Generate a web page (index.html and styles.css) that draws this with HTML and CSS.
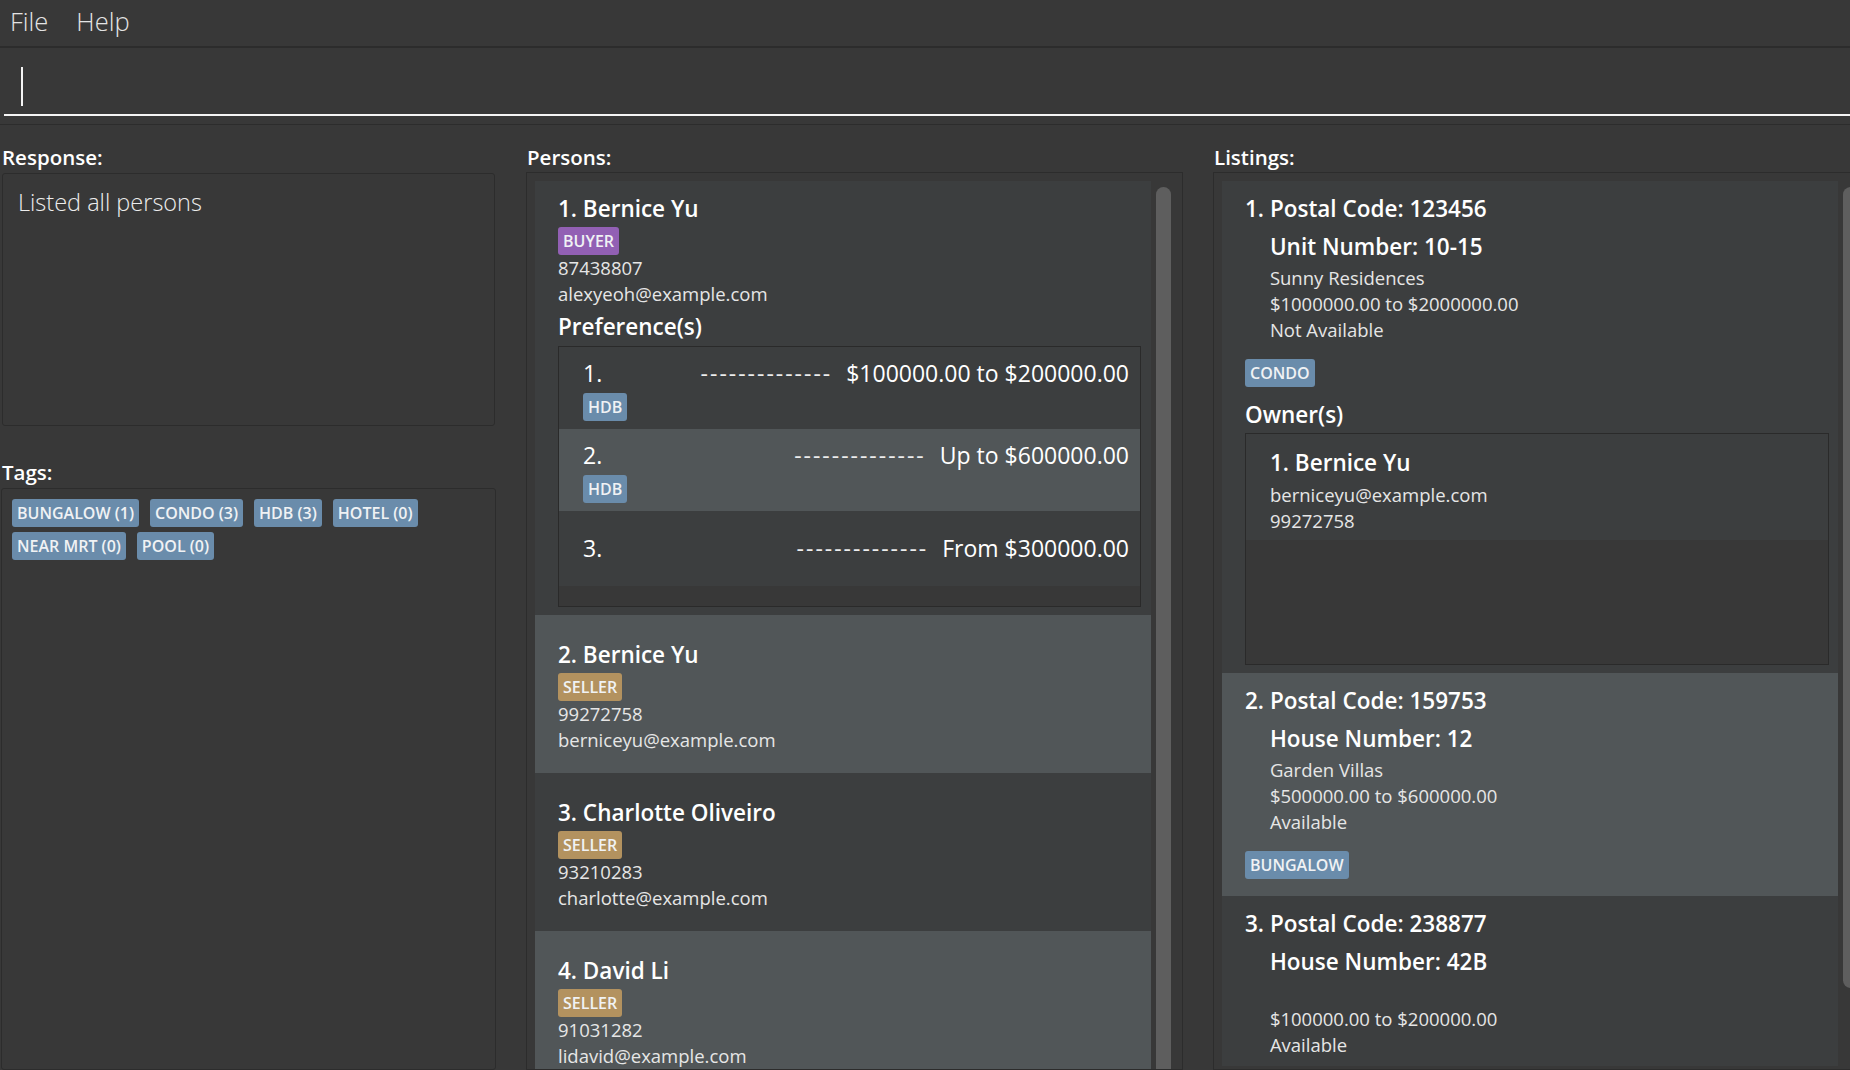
FILE: index.html
```html
<!DOCTYPE html>
<html lang="en">
<head>
<meta charset="utf-8">
<title>Address Book</title>
<link rel="stylesheet" href="styles.css">
</head>
<body>
<div class="app">
  <div class="menubar">
    <span class="menu-item">File</span>
    <span class="menu-item">Help</span>
  </div>
  <div class="command">
    <div class="command-field"><span class="caret"></span></div>
  </div>
  <div class="main">
    <div class="col col-left">
      <div class="label">Response:</div>
      <div class="response-box">Listed all persons</div>
      <div class="label tags-label">Tags:</div>
      <div class="tags-box">
        <span class="chip tag">BUNGALOW (1)</span>
        <span class="chip tag">CONDO (3)</span>
        <span class="chip tag">HDB (3)</span>
        <span class="chip tag">HOTEL (0)</span>
        <span class="chip tag">NEAR MRT (0)</span>
        <span class="chip tag">POOL (0)</span>
      </div>
    </div>

    <div class="col col-list">
      <div class="label list-label">Persons:</div>
      <div class="list-box">
        <div class="list">
          <div class="pcard odd">
            <div class="big">1. Bernice Yu</div>
            <div class="chips"><span class="chip buyer">BUYER</span></div>
            <div class="small">87438807</div>
            <div class="small">alexyeoh@example.com</div>
            <div class="section-title">Preference(s)</div>
            <div class="pref-box">
              <div class="pref odd">
                <div class="pref-line"><span class="pidx">1.</span><span class="dashes">--------------</span><span class="price">$100000.00 to $200000.00</span></div>
                <div class="chips"><span class="chip tag">HDB</span></div>
              </div>
              <div class="pref even">
                <div class="pref-line"><span class="pidx">2.</span><span class="dashes">--------------</span><span class="price">Up to $600000.00</span></div>
                <div class="chips"><span class="chip tag">HDB</span></div>
              </div>
              <div class="pref odd no-tags">
                <div class="pref-line"><span class="pidx">3.</span><span class="dashes">--------------</span><span class="price">From $300000.00</span></div>
              </div>
              <div class="pref-fill"></div>
            </div>
          </div>
          <div class="pcard even">
            <div class="big">2. Bernice Yu</div>
            <div class="chips"><span class="chip seller">SELLER</span></div>
            <div class="small">99272758</div>
            <div class="small">berniceyu@example.com</div>
          </div>
          <div class="pcard odd">
            <div class="big">3. Charlotte Oliveiro</div>
            <div class="chips"><span class="chip seller">SELLER</span></div>
            <div class="small">93210283</div>
            <div class="small">charlotte@example.com</div>
          </div>
          <div class="pcard even">
            <div class="big">4. David Li</div>
            <div class="chips"><span class="chip seller">SELLER</span></div>
            <div class="small">91031282</div>
            <div class="small">lidavid@example.com</div>
          </div>
        </div>
        <div class="track"><div class="thumb thumb-persons"></div></div>
      </div>
    </div>

    <div class="col col-list">
      <div class="label list-label">Listings:</div>
      <div class="list-box">
        <div class="list">
          <div class="lcard odd">
            <div class="lhead">
              <span class="lidx">1. </span>
              <div class="ldetails">
                <div class="big">Postal Code: 123456</div>
                <div class="big sub">Unit Number: 10-15</div>
                <div class="small first">Sunny Residences</div>
                <div class="small">$1000000.00 to $2000000.00</div>
                <div class="small">Not Available</div>
              </div>
            </div>
            <div class="chips lchips"><span class="chip tag">CONDO</span></div>
            <div class="section-title owners-title">Owner(s)</div>
            <div class="owner-box">
              <div class="owner-card">
                <div class="big">1. Bernice Yu</div>
                <div class="small first">berniceyu@example.com</div>
                <div class="small">99272758</div>
              </div>
            </div>
          </div>
          <div class="lcard even no-owner">
            <div class="lhead">
              <span class="lidx">2. </span>
              <div class="ldetails">
                <div class="big">Postal Code: 159753</div>
                <div class="big sub">House Number: 12</div>
                <div class="small first">Garden Villas</div>
                <div class="small">$500000.00 to $600000.00</div>
                <div class="small">Available</div>
              </div>
            </div>
            <div class="chips lchips"><span class="chip tag">BUNGALOW</span></div>
          </div>
          <div class="lcard odd">
            <div class="lhead">
              <span class="lidx">3. </span>
              <div class="ldetails">
                <div class="big">Postal Code: 238877</div>
                <div class="big sub">House Number: 42B</div>
                <div class="small first"></div>
                <div class="small">$100000.00 to $200000.00</div>
                <div class="small">Available</div>
              </div>
            </div>
          </div>
        </div>
        <div class="track"><div class="thumb thumb-listings"></div></div>
      </div>
    </div>
  </div>
</div>
</body>
</html>
```

FILE: styles.css
```css
* { box-sizing: border-box; }

html, body {
  margin: 0;
  padding: 0;
  background: #383838;
  overflow: hidden;
}

body {
  font-family: "Open Sans", "Noto Sans", sans-serif;
  color: #ffffff;
}

.app {
  width: 1850px;
  height: 1070px;
  display: flex;
  flex-direction: column;
  overflow: hidden;
}

/* Menu bar */
.menubar {
  height: 48px;
  flex-shrink: 0;
  display: flex;
  align-items: flex-start;
  gap: 28px;
  padding-left: 10px;
  border-bottom: 2px solid #2c2c2c;
}

.menu-item {
  font-weight: 300;
  font-size: 25.5px;
  line-height: 36px;
  margin-top: 3px;
  color: #e4e4e4;
}

/* Command box */
.command {
  height: 77px;
  flex-shrink: 0;
  padding-top: 10px;
  border-bottom: 1px solid #2c2c2c;
}

.command-field {
  margin-left: 4px;
  height: 58px;
  border-bottom: 2px solid #f4f4f4;
  padding-top: 9px;
  padding-left: 17px;
}

.caret {
  display: block;
  width: 2px;
  height: 39px;
  background: #f4f4f4;
}

/* Main area */
.main {
  flex: 1;
  min-height: 0;
  display: flex;
  gap: 30px;
  padding-top: 19px;
  padding-left: 1px;
}

.col {
  flex-shrink: 0;
  display: flex;
  flex-direction: column;
  min-height: 0;
}

.col-left { width: 495px; }
.col-list { width: 657px; }

.label {
  font-weight: 600;
  font-size: 20.5px;
  line-height: 26px;
  color: #ffffff;
  margin-bottom: 3px;
  padding-left: 1px;
}

.list-label { margin-bottom: 2px; }

.tags-label { margin-top: 33px; }

.response-box {
  height: 253px;
  margin: 0 1px;
  border: 1px solid #2c2c2c;
  border-radius: 3px;
  padding: 12px 15px;
  font-weight: 300;
  font-size: 23.5px;
  line-height: 32px;
  color: #ededed;
}

.tags-box {
  flex: 1;
  border: 1px solid #2c2c2c;
  border-radius: 3px;
  padding: 10px 10px;
  display: flex;
  flex-wrap: wrap;
  align-content: flex-start;
  column-gap: 11px;
  row-gap: 5px;
}

/* Chips */
.chip {
  display: inline-block;
  height: 28px;
  line-height: 28px;
  padding: 0 5px;
  font-weight: 600;
  font-size: 16px;
  color: #f0f2f4;
  border-radius: 3px;
  white-space: nowrap;
}

.chip.tag { background: #6a8cab; }
.chip.buyer { background: #9260b4; }
.chip.seller { background: #b3925f; }

.chips {
  display: flex;
  gap: 8px;
  margin-top: 5px;
}

/* Lists */
.list-box {
  flex: 1;
  min-height: 0;
  display: flex;
  border: 1px solid #2c2c2c;
  padding: 8px;
  overflow: hidden;
}

.list {
  width: 616px;
  flex-shrink: 0;
  display: flex;
  flex-direction: column;
}

.track {
  width: 23px;
  flex-shrink: 0;
  padding-left: 5px;
  padding-top: 6px;
}

.thumb {
  width: 15px;
  background: #5e5e5e;
  border-radius: 8px;
}

.thumb-persons { height: 920px; }
.thumb-listings { height: 801px; }

.odd { background: #3c3e3f; }
.even { background: #515658; }

.big,
.lidx,
.section-title {
  font-weight: 600;
  font-size: 22.5px;
  line-height: 27px;
  padding-top: 3px;
  color: #ffffff;
  white-space: nowrap;
}

.small {
  font-weight: 400;
  font-size: 18.5px;
  line-height: 26px;
  min-height: 26px;
  color: #e6e6e6;
  white-space: nowrap;
}

.section-title {
  margin-top: 3px;
}

/* Person cards */
.pcard {
  flex-shrink: 0;
  min-height: 158px;
  display: flex;
  flex-direction: column;
  justify-content: center;
  padding: 11px 10px 8px 23px;
}

.pref-box {
  margin-top: 6px;
  border: 1px solid #2a2a2a;
  background: #383838;
}

.pref {
  padding: 11px 11px 8px 24px;
}

.pref.no-tags {
  padding-top: 22px;
  padding-bottom: 23px;
}

.pref-line {
  display: flex;
  align-items: baseline;
  font-size: 23px;
  line-height: 30px;
  color: #ffffff;
  white-space: nowrap;
}

.dashes {
  margin-left: auto;
  margin-right: 14px;
  letter-spacing: 2px;
  color: #ededed;
}

.pref-fill { height: 20px; }

/* Listing cards */
.lcard {
  flex-shrink: 0;
  padding: 11px 9px 8px 23px;
}

.lcard.no-owner { padding-bottom: 17px; }

.lhead {
  display: flex;
  align-items: flex-start;
}

.lidx {
  white-space: pre;
}

.ldetails {
  display: flex;
  flex-direction: column;
}

.big.sub { margin-top: 8px; }
.small.first { margin-top: 5px; }

.lchips { margin-top: 16px; }

.section-title.owners-title { margin-top: 11px; }

.owner-box {
  margin-top: 5px;
  height: 232px;
  border: 1px solid #2a2a2a;
  background: #383838;
}

.owner-card {
  background: #3c3e3f;
  padding: 12px 10px 6px 24px;
}

.owner-card .small.first { margin-top: 6px; }
```
